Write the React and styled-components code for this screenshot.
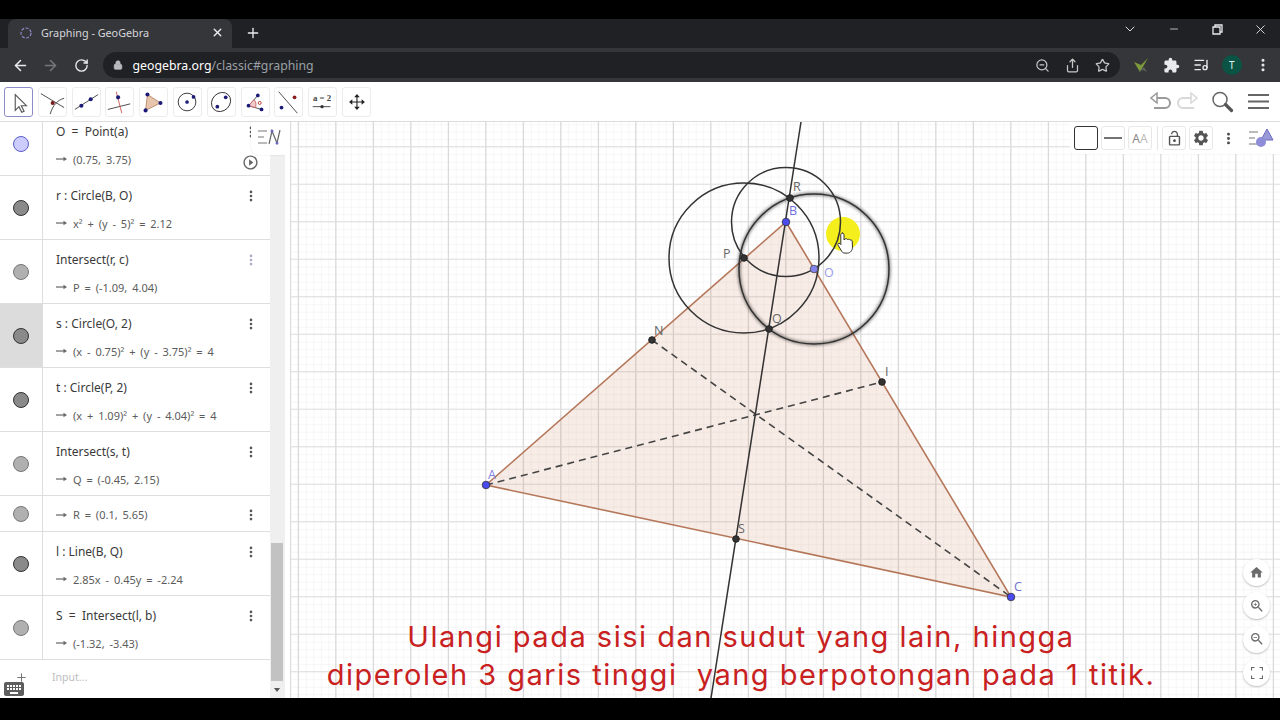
import React from "react";
import styled, { createGlobalStyle } from "styled-components";
import {
  ArrowLeft,
  ArrowRight,
  RotateCw,
  Lock,
  ZoomOut,
  Star,
  ListMusic,
  EllipsisVertical,
  X,
  Plus,
  ChevronDown,
  Minus,
  Share,
} from "lucide-react";
import {
  MdHome,
  MdExtension,
  MdSettings,
  MdZoomIn,
  MdZoomOut,
  MdLockOpen,
  MdKeyboard,
  MdPlayCircleOutline,
} from "react-icons/md";

const GlobalStyle = createGlobalStyle`
  html, body {
    margin: 0;
    padding: 0;
    background: #000;
    overflow: hidden;
  }
  * {
    box-sizing: border-box;
  }
`;

const Page = styled.div`
  width: 1280px;
  height: 720px;
  display: flex;
  flex-direction: column;
  background: #000;
  font-family: "Noto Sans", "Open Sans", sans-serif;
  overflow: hidden;
`;

const Letterbox = styled.div`
  flex: 0 0 ${p => p.$h}px;
  background: #000;
`;

const TabStrip = styled.div`
  flex: 0 0 29px;
  display: flex;
  align-items: stretch;
  background: #202124;
  padding-left: 8px;
  color: #e8eaed;
`;

const Tab = styled.div`
  width: 224px;
  display: flex;
  align-items: center;
  background: #35363a;
  border-radius: 8px 8px 0 0;
  padding: 0 8px 2px 11px;
  gap: 8px;
  font-size: 10.8px;
`;

const TabTitle = styled.span`
  flex: 1;
  color: #d6d7da;
`;

const NewTab = styled.div`
  width: 42px;
  display: flex;
  align-items: center;
  justify-content: center;
  padding-bottom: 2px;
`;

const WindowControls = styled.div`
  margin-left: auto;
  margin-right: -2px;
  display: flex;
  align-items: flex-start;
  padding-top: 2px;
`;

const WindowButton = styled.div`
  width: 43.3px;
  height: 16px;
  display: flex;
  align-items: center;
  justify-content: center;
`;

const AddressBar = styled.div`
  flex: 0 0 34px;
  display: flex;
  align-items: center;
  background: #35363a;
  padding-left: 5px;
  color: #e8eaed;
`;

const NavButton = styled.div`
  width: 30.5px;
  display: flex;
  justify-content: center;
  color: ${p => (p.$off ? "#76787c" : "#e8eaed")};
`;

const UrlPill = styled.div`
  width: 1017px;
  height: 26px;
  margin-left: 6px;
  display: flex;
  align-items: center;
  background: #202124;
  border-radius: 13px;
  padding: 0 10px;
  font-size: 12.3px;
  color: #fff;
`;

const LockSlot = styled.span`
  display: flex;
  margin-right: 10px;
`;

const UrlPath = styled.span`
  color: #9aa0a6;
`;

const UrlActions = styled.div`
  margin-left: auto;
  display: flex;
  gap: 15px;
  color: #c4c7c5;
`;

const Extensions = styled.div`
  flex: 1;
  display: flex;
  align-items: center;
  justify-content: space-between;
  padding: 0 9px 0 12px;
`;

const Avatar = styled.div`
  width: 20px;
  height: 20px;
  border-radius: 50%;
  background: #0b5345;
  color: #e0f0ea;
  display: flex;
  align-items: center;
  justify-content: center;
  font-size: 10px;
`;

const ToolBar = styled.div`
  flex: 0 0 40px;
  display: flex;
  align-items: center;
  background: #fff;
  padding: 0 11px 0 4px;
  border-bottom: 1px solid #dcdcdc;
  gap: 4.8px;
`;

const ToolButton = styled.div`
  width: 29px;
  height: 30px;
  border-radius: 3px;
  border: 1px solid ${p => (p.$active ? "#8c8cc8" : "#ececec")};
  background: #fff;
  display: flex;
  align-items: center;
  justify-content: center;
`;

const ToolbarRight = styled.div`
  margin-left: auto;
  display: flex;
  align-items: center;
  gap: 6px;
`;

const SearchSlot = styled.div`
  display: flex;
  margin: 0 8px 0 6px;
  width: 24px;
  justify-content: center;
`;

const Main = styled.div`
  flex: 0 0 576px;
  display: flex;
  background: #fff;
  overflow: hidden;
`;

const AlgebraPanel = styled.div`
  position: relative;
  flex: 0 0 285px;
  display: flex;
  overflow: hidden;
`;

const AlgebraList = styled.div`
  width: 270px;
  display: flex;
  flex-direction: column;
  margin-top: -10px;
`;

const Row = styled.div`
  flex: 0 0 ${p => (p.$short ? 36 : 64)}px;
  display: flex;
  border-bottom: 1px solid #dedede;
`;

const MarbleCell = styled.div`
  flex: 0 0 43px;
  display: flex;
  align-items: center;
  justify-content: center;
  border-right: 1px solid #dedede;
  background: ${p => (p.$selected ? "#dcdcdc" : "#fff")};
`;

const Marble = styled.div`
  width: 16px;
  height: 16px;
  border-radius: 50%;
  background: ${p => p.$fill};
  border: 1px solid ${p => p.$edge};
`;

const RowBody = styled.div`
  flex: 1;
  display: flex;
  flex-direction: column;
  justify-content: ${p => (p.$short ? "center" : "flex-start")};
  padding-top: ${p => (p.$short ? 2 : 11)}px;
  padding-left: 13px;
  min-width: 0;
`;

const Definition = styled.div`
  height: 20px;
  line-height: 18px;
  font-size: 12px;
  color: #3a3a3a;
  white-space: pre;
`;

const Output = styled.div`
  display: flex;
  align-items: center;
  gap: 6px;
  height: 18px;
  margin-top: ${p => (p.$short ? 0 : 7)}px;
  font-size: 11px;
  word-spacing: 2px;
  color: #5c5c5c;
  white-space: pre;
`;

const RowActions = styled.div`
  flex: 0 0 38px;
  display: flex;
  flex-direction: column;
  align-items: center;
  padding-top: ${p => (p.$short ? 12 : 13)}px;
  padding-right: 1px;
  gap: 15px;
  color: ${p => (p.$faint ? "#a9a9c4" : "#555")};
`;

const PlayButton = styled.div`
  display: flex;
  color: #666;
`;

const InputRow = styled.div`
  flex: 1;
  display: flex;
`;

const AddCell = styled.div`
  flex: 0 0 43px;
  display: flex;
  justify-content: center;
  padding-top: 11px;
  color: #777;
`;

const InputHint = styled.div`
  padding: 10px 0 0 9px;
  font-size: 10.5px;
  color: #bdbdbd;
`;

const KeyboardTab = styled.div`
  position: absolute;
  left: 2px;
  bottom: -3px;
  display: flex;
  color: #5e5e5e;
`;

const ScrollTrack = styled.div`
  position: relative;
  flex: 0 0 15px;
  background: #efefef;
`;

const ScrollThumb = styled.div`
  position: absolute;
  left: 1px;
  width: 12px;
  top: 421px;
  height: 138px;
  background: #c2c2c2;
`;

const ScrollArrow = styled.div`
  position: absolute;
  left: 4px;
  bottom: 6px;
  width: 0;
  height: 0;
  border-left: 3.5px solid transparent;
  border-right: 3.5px solid transparent;
  border-top: 4px solid #555;
`;

const AlgebraToggle = styled.div`
  position: absolute;
  top: 0;
  right: 0;
  width: 34px;
  height: 33px;
  padding: 0 0 4px 3px;
  background: #fff;
  border-radius: 0 0 0 8px;
  display: flex;
  align-items: center;
  justify-content: center;
  box-shadow: 0 0 2px rgba(0, 0, 0, 0.12);
`;

const Divider = styled.div`
  flex: 0 0 6px;
  background: #fff;
  border-right: 1px solid #dcdcdc;
`;

const CanvasArea = styled.div`
  position: relative;
  flex: 1;
  overflow: hidden;
`;

const Drawing = styled.svg`
  display: block;
  width: 989px;
  height: 576px;
`;

const StyleBar = styled.div`
  position: absolute;
  top: 0;
  right: 0;
  width: 210px;
  height: 32px;
  display: flex;
  align-items: center;
  padding-left: 4px;
  gap: 3px;
  background: #fff;
  border-radius: 0 0 0 6px;
`;

const StyleButton = styled.div`
  width: 24px;
  height: 24px;
  display: flex;
  align-items: center;
  justify-content: center;
  border-radius: 3px;
  border: 1px solid ${p => (p.$strong ? "#333" : "#e8e8e8")};
  color: #555;
  font-size: 12px;
`;

const FadedLetter = styled.span`
  color: #bdbdbd;
`;

const GreyLetter = styled.span`
  color: #8a8a8a;
`;

const StyleSep = styled.div`
  width: 1px;
  height: 24px;
  margin: 0 1px 0 2px;
  background: #e4e4e4;
`;

const StyleDots = styled.div`
  display: flex;
  margin-left: 5px;
  color: #444;
`;

const StyleToggle = styled.div`
  display: flex;
  margin-left: 9px;
`;

const ViewButtons = styled.div`
  position: absolute;
  right: 10px;
  bottom: 12px;
  display: flex;
  flex-direction: column;
  gap: 6.3px;
`;

const ViewButton = styled.div`
  width: 27px;
  height: 27px;
  border-radius: 50%;
  background: #fff;
  box-shadow: 0 1px 2px rgba(0, 0, 0, 0.25);
  display: flex;
  align-items: center;
  justify-content: center;
  color: #6a6a6a;
`;

const Caption = styled.div`
  position: absolute;
  left: 0;
  bottom: 4px;
  width: 900px;
  text-align: center;
  font-family: Inter, "Open Sans", sans-serif;
  font-size: 29px;
  line-height: 38px;
  letter-spacing: 1.5px;
  color: #c8211f;
  white-space: pre;
`;

const navy = "#1c1c78";

const toolIcons = [
  <>
    <path d="M11 7v17l4-4 3 6 2.500-1-3-6h5.500z" fill="#fff" stroke="#555" strokeWidth="1.2" />
  </>,
  <>
    <path d="M2 6l25 15" stroke="#444" fill="none" />
    <path d="M27 11c-7 2-12 7-15 17" stroke="#444" fill="none" />
    <circle cx="14.7" cy="16" r="2.2" fill="#7a1c1c" />
  </>,
  <>
    <path d="M2 23L27 7" stroke="#444" />
    <circle cx="9" cy="19" r="2.2" fill={navy} />
    <circle cx="19" cy="12" r="2.2" fill={navy} />
  </>,
  <>
    <path d="M2 23l24-6" stroke="#444" />
    <path d="M11 4l6 23" stroke="#d05a5a" />
    <circle cx="13" cy="10" r="2.2" fill={navy} />
  </>,
  <>
    <path d="M8 7l14 9-16 8z" fill="#e8c6ae" stroke="#b98a6c" />
    <circle cx="8" cy="7" r="2.2" fill={navy} />
    <circle cx="22" cy="16" r="2.2" fill={navy} />
    <circle cx="6" cy="24" r="2.2" fill={navy} />
  </>,
  <>
    <circle cx="14" cy="15" r="9.500" fill="none" stroke="#333" />
    <circle cx="14" cy="15" r="2" fill={navy} />
    <circle cx="21" cy="9.500" r="2" fill={navy} />
  </>,
  <>
    <ellipse cx="14" cy="15" rx="11" ry="9.500" transform="rotate(-45 14 15)" fill="none" stroke="#333" />
    <circle cx="19" cy="10" r="2" fill={navy} />
    <circle cx="10" cy="20" r="2" fill={navy} />
  </>,
  <>
    <path d="M7 19L17 8M7 19l14 4" stroke="#444" fill="none" />
    <path d="M7 19l6-6.500c2 2 2.500 5 1.500 8.500z" fill="#f2c9c9" stroke="#c96a6a" />
    <circle cx="19" cy="16" r="1.600" fill="none" stroke="#b33" />
    <circle cx="7" cy="19" r="2" fill={navy} />
    <circle cx="17" cy="8" r="2" fill={navy} />
    <circle cx="21" cy="23" r="2" fill={navy} />
  </>,
  <>
    <path d="M4 4l20 23" stroke="#444" />
    <circle cx="21" cy="10" r="2" fill="#8a1c1c" />
    <circle cx="7" cy="21" r="2" fill={navy} />
  </>,
  <>
    <text x="14" y="14" textAnchor="middle" fontFamily="Liberation Serif, serif" fontSize="9.500" fontWeight="700" fill="#444">
      a = 2
    </text>
    <path d="M4 20h19" stroke="#444" />
    <circle cx="14" cy="20" r="1.800" fill="#333" />
  </>,
  <>
    <path d="M15 9v12M9 15h12" stroke="#222" strokeWidth="1.200" />
    <path d="M15 6.500l3 3.500h-6zM15 23.500l3-3.500h-6zM6.500 15l3.500-3v6zM23.500 15L20 12v6z" fill="#222" />
  </>,
];

const objects = [
  { def: "O  =  Point(a)", out: "(0.75, 3.75)", fill: "#ccccff", edge: "#5c5cc8", play: true },
  { def: "r : Circle(B, O)", out: "x² + (y - 5)² = 2.12", fill: "#8a8a8a", edge: "#333" },
  { def: "Intersect(r, c)", out: "P = (-1.09, 4.04)", fill: "#b0b0b0", edge: "#777", faint: true },
  { def: "s : Circle(O, 2)", out: "(x - 0.75)² + (y - 3.75)² = 4", fill: "#8a8a8a", edge: "#333", selected: true },
  { def: "t : Circle(P, 2)", out: "(x + 1.09)² + (y - 4.04)² = 4", fill: "#8a8a8a", edge: "#333" },
  { def: "Intersect(s, t)", out: "Q = (-0.45, 2.15)", fill: "#b0b0b0", edge: "#777" },
  { out: "R = (0.1, 5.65)", fill: "#b0b0b0", edge: "#777", short: true },
  { def: "l : Line(B, Q)", out: "2.85x - 0.45y = -2.24", fill: "#8a8a8a", edge: "#333" },
  { def: "S  =  Intersect(l, b)", out: "(-1.32, -3.43)", fill: "#b0b0b0", edge: "#777" },
];

const major = [];
for (let x = 298.3; x < 1280; x += 37.5) major.push(x);
const majorY = [];
for (let y = 146.7; y < 700; y += 37.5) majorY.push(y);

const darkPoints = [
  [744, 258],
  [769, 329],
  [790, 198],
  [652, 340],
  [882, 382],
  [736, 539],
];

const labels = [
  ["A", 488, 479, "#8080e0"],
  ["B", 789, 215, "#7070e0"],
  ["O", 824, 277, "#9a9ae8"],
  ["C", 1014, 591, "#7070d0"],
  ["P", 723, 258, "#666"],
  ["R", 793, 191, "#666"],
  ["Q", 772, 323, "#666"],
  ["N", 654, 335, "#666"],
  ["I", 885, 376, "#666"],
  ["S", 738, 533, "#666"],
];

const Arrow = () => (
  <svg width="11" height="6" viewBox="0 0 11 6">
    <path d="M0 3h8" stroke="#666" strokeWidth="1.2" />
    <path d="M11 3L7.500 0.800v4.400z" fill="#666" />
  </svg>
);

const Favicon = () => (
  <svg width="14" height="14" viewBox="0 0 14 14">
    <circle cx="7" cy="7" r="5" fill="none" stroke="#8c8cc8" strokeWidth="1.2" strokeDasharray="3 1.500" />
  </svg>
);

const ToggleIcon = ({ withShape }) => (
  <svg width="26" height="20" viewBox="0 0 26 20">
    <path d="M1 4h9M1 10h6M1 16h9" stroke="#777" strokeWidth="1.2" />
    {withShape ? (
      <>
        <path d="M19 1l6 11H13z" fill="#9a9ad8" stroke="#6a6ac0" />
        <circle cx="13" cy="14" r="5" fill="#8d8dd8" />
      </>
    ) : (
      <>
        <path d="M12 17L15 4l5 12 3-13" fill="none" stroke="#666" strokeWidth="1.2" />
        <circle cx="15" cy="4" r="1.500" fill="#6a6ac0" />
        <circle cx="20" cy="16" r="1.500" fill="#6a6ac0" />
      </>
    )}
  </svg>
);

const HistoryIcon = ({ flip, color }) => (
  <svg width="21" height="19" viewBox="0 0 21 19" style={flip ? { transform: "scaleX(-1)" } : undefined}>
    <path d="M5 6h10a4.500 4.500 0 0 1 0 10H4" fill="none" stroke={color} strokeWidth="2" />
    <path d="M7 1L1 6l6 5z" fill="#fff" stroke={color} strokeWidth="1.5" />
  </svg>
);

const Magnifier = () => (
  <svg width="24" height="24" viewBox="0 0 24 24">
    <circle cx="10" cy="9.500" r="7" fill="none" stroke="#666" strokeWidth="1.500" />
    <path d="M15.500 14.500l6 6" stroke="#555" strokeWidth="3.200" strokeLinecap="round" />
  </svg>
);

const Hamburger = () => (
  <svg width="21" height="17" viewBox="0 0 21 17">
    <path d="M0 2h21M0 8.500h21M0 15h21" stroke="#666" strokeWidth="2" />
  </svg>
);

const VMark = () => (
  <svg width="18" height="18" viewBox="0 0 18 18">
    <path d="M2 6l6 10 8-14-7 7z" fill="#7c9a3a" />
    <path d="M6 16l6-5 3 5-4-2z" fill="#5a5f55" />
  </svg>
);

const App = () => (
  <Page>
    <GlobalStyle />
    <Letterbox $h={19} />
    <TabStrip>
      <Tab>
        <Favicon />
        <TabTitle>Graphing - GeoGebra</TabTitle>
        <X size={13} strokeWidth={2.5} />
      </Tab>
      <NewTab>
        <Plus size={16} strokeWidth={2} />
      </NewTab>
      <WindowControls>
        <WindowButton>
          <ChevronDown size={16} strokeWidth={1.4} />
        </WindowButton>
        <WindowButton>
          <Minus size={12} strokeWidth={1.5} />
        </WindowButton>
        <WindowButton>
          <svg width="11" height="11" viewBox="0 0 11 11">
            <path d="M3 2.500V1h7v7H8.500M1 3h7v7H1z" fill="none" stroke="#e8eaed" strokeWidth="1.3" />
          </svg>
        </WindowButton>
        <WindowButton>
          <X size={15} strokeWidth={1.4} />
        </WindowButton>
      </WindowControls>
    </TabStrip>
    <AddressBar>
      <NavButton>
        <ArrowLeft size={17} strokeWidth={2.2} />
      </NavButton>
      <NavButton $off>
        <ArrowRight size={17} strokeWidth={2.2} />
      </NavButton>
      <NavButton>
        <RotateCw size={15} strokeWidth={2.2} />
      </NavButton>
      <UrlPill>
        <LockSlot>
          <Lock size={10} fill="#b8babd" color="#b8babd" />
        </LockSlot>
        geogebra.org<UrlPath>/classic#graphing</UrlPath>
        <UrlActions>
          <ZoomOut size={15} />
          <Share size={15} />
          <Star size={15} />
        </UrlActions>
      </UrlPill>
      <Extensions>
        <VMark />
        <MdExtension size={17} color="#e8eaed" />
        <ListMusic size={16} />
        <Avatar>T</Avatar>
        <EllipsisVertical size={16} strokeWidth={2.6} />
      </Extensions>
    </AddressBar>
    <ToolBar>
      {toolIcons.map((icon, i) => (
        <ToolButton key={i} $active={i === 0}>
          <svg width="29" height="30" viewBox="0 0 29 30">
            {icon}
          </svg>
        </ToolButton>
      ))}
      <ToolbarRight>
        <HistoryIcon color="#9a9a9a" />
        <HistoryIcon flip color="#d8d8d8" />
        <SearchSlot>
          <Magnifier />
        </SearchSlot>
        <Hamburger />
      </ToolbarRight>
    </ToolBar>
    <Main>
      <AlgebraPanel>
        <AlgebraList>
          {objects.map((o, i) => (
            <Row key={i} $short={o.short}>
              <MarbleCell $selected={o.selected}>
                <Marble $fill={o.fill} $edge={o.edge} />
              </MarbleCell>
              <RowBody $short={o.short}>
                {o.def && <Definition>{o.def}</Definition>}
                <Output $short={o.short}>
                  <Arrow />
                  {o.out}
                </Output>
              </RowBody>
              <RowActions $faint={o.faint} $short={o.short}>
                <EllipsisVertical size={14} strokeWidth={2.6} />
                {o.play && (
                  <PlayButton>
                    <MdPlayCircleOutline size={17} />
                  </PlayButton>
                )}
              </RowActions>
            </Row>
          ))}
          <InputRow>
            <AddCell>
              <Plus size={13} />
            </AddCell>
            <InputHint>Input...</InputHint>
          </InputRow>
        </AlgebraList>
        <ScrollTrack>
          <ScrollThumb />
          <ScrollArrow />
        </ScrollTrack>
        <AlgebraToggle>
          <ToggleIcon />
        </AlgebraToggle>
        <KeyboardTab>
          <MdKeyboard size={24} />
        </KeyboardTab>
      </AlgebraPanel>
      <Divider />
      <CanvasArea>
        <Drawing viewBox="291 122 989 576">
          <defs>
            <pattern id="minor" x="298.3" y="146.7" width="7.5" height="7.5" patternUnits="userSpaceOnUse">
              <path d="M0 0V7.500M0 0H7.500" stroke="#eeeeee" strokeWidth="1" fill="none" />
            </pattern>
            <filter id="soft" x="-20%" y="-20%" width="140%" height="140%">
              <feGaussianBlur stdDeviation="1.6" />
            </filter>
          </defs>
          <rect x="291" y="122" width="989" height="576" fill="url(#minor)" />
          {major.map(x => (
            <path key={x} d={`M${x} 122V698`} stroke="#d2d2d2" />
          ))}
          {majorY.map(y => (
            <path key={y} d={`M291 ${y}H1280`} stroke="#dedede" />
          ))}

          <path d="M486 485L786 222L1011 597Z" fill="#cd825a" fillOpacity="0.15" stroke="#b5775a" strokeWidth="1.6" />
          <path d="M652 340L1011 597M486 485L882 382" stroke="#444" strokeWidth="1.6" strokeDasharray="7 5" fill="none" />
          <path d="M801 122L711 698" stroke="#333" strokeWidth="1.5" />

          <circle cx="843" cy="234" r="17" fill="#f4ee1c" />

          <circle cx="814" cy="269" r="75" fill="none" stroke="#222" strokeWidth="3.5" opacity="0.5" filter="url(#soft)" />
          <circle cx="814" cy="269" r="75" fill="none" stroke="#333" strokeWidth="1.5" />
          <circle cx="744" cy="258" r="75" fill="none" stroke="#333" strokeWidth="1.5" />
          <circle cx="786" cy="222" r="54.500" fill="none" stroke="#333" strokeWidth="1.5" />

          {darkPoints.map(([x, y]) => (
            <circle key={`${x}-${y}`} cx={x} cy={y} r="3.3" fill="#333" stroke="#222" />
          ))}
          <circle cx="486" cy="485" r="3.8" fill="#4a4af0" stroke="#333" strokeWidth="0.8" />
          <circle cx="786" cy="222" r="3.8" fill="#4a4af0" stroke="#333" strokeWidth="0.8" />
          <circle cx="1011" cy="597" r="3.8" fill="#4a4af0" stroke="#333" strokeWidth="0.8" />
          <circle cx="814" cy="269" r="3.8" fill="#8484f0" stroke="#444" strokeWidth="0.8" />

          {labels.map(([t, x, y, c]) => (
            <text key={t} x={x} y={y} fontFamily="Open Sans, sans-serif" fontSize="12.5" fill={c}>
              {t}
            </text>
          ))}

          <path
            d="M842 233c1.500 0 2 1 2 2v5l1 -1c1 -.6 2 -.3 2.500 .5c1 -.5 2 -.2 2.500 .6c1 -.4 2 0 2.200 1l.3 6c0 3 -2 6 -5 6h-2.500c-2 0 -3 -1 -4 -3l-3 -5c-.8 -1.200 .6 -2.500 2 -1.500l.8 1v-10c0 -1 .7 -1.600 1.700 -1.600z"
            fill="#fff"
            stroke="#333"
            strokeWidth="1"
          />
        </Drawing>
        <Caption>
          {"Ulangi pada sisi dan sudut yang lain, hingga\ndiperoleh 3 garis tinggi  yang berpotongan pada 1 titik."}
        </Caption>
        <StyleBar>
          <StyleButton $strong />
          <StyleButton>
            <svg width="18" height="2" viewBox="0 0 18 2">
              <path d="M0 1h18" stroke="#444" strokeWidth="1.5" />
            </svg>
          </StyleButton>
          <StyleButton>
            <GreyLetter>A</GreyLetter>
            <FadedLetter>A</FadedLetter>
          </StyleButton>
          <StyleSep />
          <StyleButton>
            <MdLockOpen size={17} />
          </StyleButton>
          <StyleButton>
            <MdSettings size={18} />
          </StyleButton>
          <StyleDots>
            <EllipsisVertical size={15} strokeWidth={2.6} />
          </StyleDots>
          <StyleToggle>
            <ToggleIcon withShape />
          </StyleToggle>
        </StyleBar>
        <ViewButtons>
          <ViewButton>
            <MdHome size={15} />
          </ViewButton>
          <ViewButton>
            <MdZoomIn size={16} />
          </ViewButton>
          <ViewButton>
            <MdZoomOut size={16} />
          </ViewButton>
          <ViewButton>
            <svg width="12" height="12" viewBox="0 0 12 12">
              <path d="M0.500 3.500v-3h3M8.500 .5h3v3M11.500 8.500v3h-3M3.500 11.500h-3v-3" fill="none" stroke="#6a6a6a" strokeWidth="1.2" />
            </svg>
          </ViewButton>
        </ViewButtons>
      </CanvasArea>
    </Main>
    <Letterbox $h={22} />
  </Page>
);

export default App;
